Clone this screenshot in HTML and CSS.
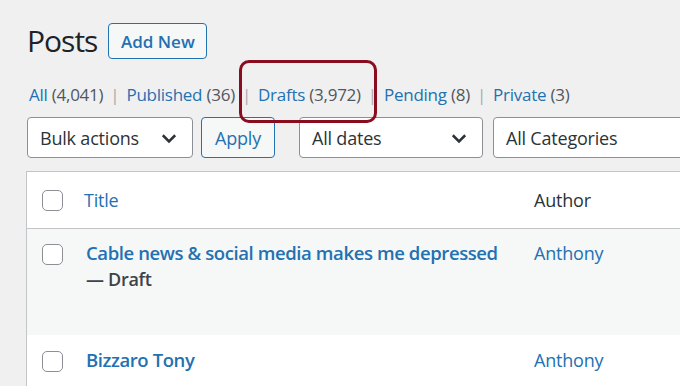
FILE: index.html
```html
<!DOCTYPE html>
<html lang="en">
<head>
<meta charset="utf-8">
<title>Posts</title>
<link rel="stylesheet" href="styles.css">
</head>
<body>
<div class="wrap">
  <div class="head">
    <h1 class="title">Posts</h1>
    <a class="btn-outline">Add New</a>
  </div>
  <ul class="subsubsub">
    <li><a>All <span class="count">(4,041)</span></a><span class="sep">|</span></li>
    <li><a>Published <span class="count">(36)</span></a><span class="sep">|</span></li>
    <li class="marked"><a>Drafts <span class="count">(3,972)</span></a><span class="sep">|</span><span class="annot"></span></li>
    <li><a>Pending <span class="count">(8)</span></a><span class="sep">|</span></li>
    <li><a>Private <span class="count">(3)</span></a></li>
  </ul>
  <div class="tablenav">
    <div class="select w-bulk">Bulk actions<svg class="chev" viewBox="0 0 16 16"><path d="M3.5 6l4.5 4.5L12.5 6" fill="none" stroke="#2c3338" stroke-width="1.8"/></svg></div>
    <button class="btn-apply">Apply</button>
    <div class="select w-dates">All dates<svg class="chev" viewBox="0 0 16 16"><path d="M3.5 6l4.5 4.5L12.5 6" fill="none" stroke="#2c3338" stroke-width="1.8"/></svg></div>
    <div class="select w-cats">All Categories</div>
  </div>
  <div class="table">
    <div class="row thead">
      <div class="cb"><span class="box"></span></div>
      <div class="col-title"><a class="th-link">Title</a></div>
      <div class="col-author">Author</div>
    </div>
    <div class="row alt r1">
      <div class="cb"><span class="box"></span></div>
      <div class="col-title"><a class="row-title">Cable news &amp; social media makes me depressed</a><div class="state">— Draft</div></div>
      <div class="col-author"><a class="author">Anthony</a></div>
    </div>
    <div class="row r2">
      <div class="cb"><span class="box"></span></div>
      <div class="col-title"><a class="row-title">Bizzaro Tony</a></div>
      <div class="col-author"><a class="author">Anthony</a></div>
    </div>
  </div>
</div>
</body>
</html>
```

FILE: styles.css
```css
html, body {
  margin: 0;
  padding: 0;
  overflow: hidden;
  background: #f0f0f1;
}
body {
  width: 680px;
  height: 386px;
  font-family: "Open Sans", "Noto Sans", sans-serif;
  color: #3c434a;
}
.wrap {
  width: 900px;
  padding-left: 26px;
}
.head {
  display: flex;
  align-items: center;
  height: 36px;
  padding-top: 23px;
}
.title {
  margin: 0 11px 0 1px;
  font-size: 30px;
  font-weight: 400;
  color: #1d2327;
  line-height: 36px;
  letter-spacing: -1px;
}
.btn-outline {
  box-sizing: border-box;
  height: 36px;
  width: 99px;
  border: 1px solid #2271b1;
  border-radius: 4px;
  color: #2271b1;
  background: #f6f7f7;
  font-size: 17px;
  font-weight: 600;
  display: flex;
  align-items: center;
  justify-content: center;
}
.subsubsub {
  list-style: none;
  margin: 0;
  padding: 0 0 0 3px;
  display: flex;
  height: 30px;
  margin-top: 21px;
  font-size: 17px;
  line-height: 30px;
  letter-spacing: -0.25px;
}
.subsubsub li {
  position: relative;
  white-space: nowrap;
}
.subsubsub a { color: #2271b1; }
.count { color: #50575e; }
.sep {
  color: #a7aaad;
  padding: 0 7px 0 7px;
}
.annot {
  position: absolute;
  left: -19px;
  top: -20px;
  width: 132px;
  height: 57px;
  border: 3px solid #8a0d1f;
  border-radius: 10px;
}
.tablenav {
  display: flex;
  margin-top: 7px;
  height: 41px;
  padding-left: 1px;
}
.select {
  box-sizing: border-box;
  height: 41px;
  border: 1px solid #8c8f94;
  border-radius: 4px;
  background: #fff;
  color: #2c3338;
  font-size: 18px;
  padding: 0 12px;
  display: flex;
  align-items: center;
  justify-content: space-between;
  letter-spacing: -0.2px;
}
.chev { width: 22px; height: 22px; }
.w-bulk { width: 166px; margin-right: 8px; }
.w-dates { width: 184px; margin-right: 10px; margin-left: 24px; }
.w-cats { width: 260px; }
.btn-apply {
  box-sizing: border-box;
  height: 41px;
  width: 74px;
  border: 1px solid #2271b1;
  border-radius: 4px;
  background: #f6f7f7;
  color: #2271b1;
  font-family: inherit;
  font-size: 18px;
  letter-spacing: -0.2px;
  padding: 0;
}
.table {
  margin-top: 13px;
  border: 1px solid #c3c4c7;
  border-right: none;
  background: #fff;
  width: 860px;
}
.row {
  display: flex;
  align-items: flex-start;
}
.thead {
  height: 56px;
  align-items: center;
  border-bottom: 1px solid #c3c4c7;
}
.cb {
  width: 57px;
  flex: none;
  display: flex;
  padding-left: 15px;
  box-sizing: border-box;
}
.box {
  width: 21px;
  height: 21px;
  box-sizing: border-box;
  border: 1px solid #8c8f94;
  border-radius: 5px;
  background: #fff;
}
.col-title {
  width: 450px;
  flex: none;
  font-size: 18px;
}
.th-link { color: #2271b1; letter-spacing: -0.2px; }
.col-author {
  font-size: 18px;
  color: #2c3338;
  letter-spacing: -0.2px;
}
.alt { background: #f6f7f7; }
.r1 { height: 106px; padding-top: 12px; box-sizing: border-box; }
.r2 { height: 60px; padding-top: 13px; box-sizing: border-box; }
.r1 .cb, .r2 .cb { padding-top: 3px; }
.row-title {
  color: #2271b1;
  font-weight: 600;
  font-size: 18.5px;
  letter-spacing: -0.4px;
  line-height: 24px;
  margin-left: 2px;
  display: inline-block;
}
.state {
  color: #3c434a;
  font-weight: 600;
  font-size: 18px;
  line-height: 28px;
  margin-left: 2px;
  letter-spacing: -0.3px;
}
.author { color: #2271b1; line-height: 24px; }
```
